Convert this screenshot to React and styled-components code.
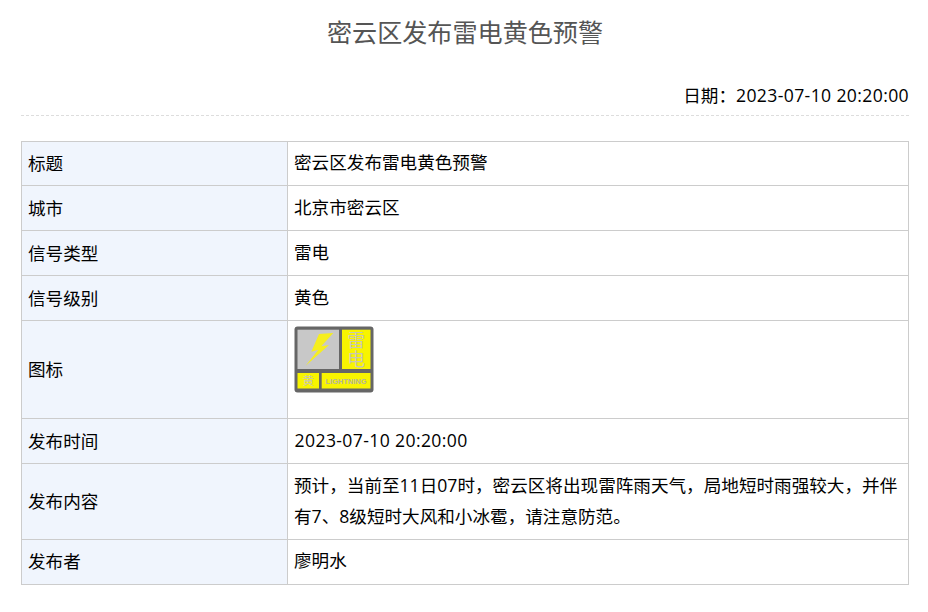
import React from "react";
import styled, { createGlobalStyle } from "styled-components";

const Global = createGlobalStyle`
  html, body { margin: 0; padding: 0; background: #fff; }
  body { font-family: "Open Sans", "Noto Sans CJK SC", sans-serif; color: #000; }
`;
const Page = styled.div`
  width: 888px;
  margin-left: 21px;
  padding: 0 0 27px;
`;
const Title = styled.h1`
  margin: 0;
  height: 65px;
  line-height: 65px;
  font-size: 25.1px;
  font-weight: 400;
  text-align: center;
  color: #555;
`;
const DateLine = styled.div`
  height: 50px;
  line-height: 60px;
  font-size: 17.6px;
  text-align: right;
  border-bottom: 1px dashed #ddd;
  margin-bottom: 25px;
`;
const Num = styled.span`
  letter-spacing: 0.37px;
  margin-left: ${(p) => p.$shift ?? 0}px;
`;
const Table = styled.table`
  width: 888px;
  border-collapse: collapse;
  table-layout: fixed;
  font-size: 17.6px;
`;
const Row = styled.tr`
  height: ${(p) => p.$h}px;
`;
const Label = styled.td`
  width: 266px;
  box-sizing: border-box;
  padding: 0 6px ${(p) => p.$pb ?? 2}px;
  background: #f0f5fd;
  border: 1px solid #ccc;
`;
const Value = styled.td`
  padding: 0 6px ${(p) => p.$pb ?? 2}px;
  border: 1px solid #ccc;
  line-height: 31px;
`;
const IconWrap = styled.div`
  height: 67px;
  margin-top: -19px;
  line-height: 0;
`;
const IconText = styled.text`
  fill: ${(p) => (p.$latin ? "#b4b49c" : "#c8c8b0")};
  text-anchor: middle;
  font-family: ${(p) => (p.$latin ? '"Liberation Sans", sans-serif' : '"Noto Sans CJK SC", sans-serif')};
  font-weight: ${(p) => (p.$latin ? 700 : 400)};
`;

function SignalIcon() {
  return (
    <svg width="80" height="67" viewBox="0 0 80 67">
      <rect x="0.5" y="0.5" width="79" height="66" rx="3" fill="#666" />
      <rect x="3.5" y="3.7" width="41.5" height="39.3" fill="#c8c8c8" />
      <path d="M39.3 7 L25 8 L17.3 25.7 L24.3 23.7 L11.7 39.7 L35 19 L27.3 20.3 Z" fill="#f6ee1e" />
      <rect x="48" y="3.7" width="28.5" height="39.3" fill="#f8f400" />
      <IconText x="62.3" y="20.5" fontSize="18">雷</IconText>
      <IconText x="62.3" y="39.5" fontSize="18">电</IconText>
      <rect x="3.5" y="47" width="21.5" height="15.5" fill="#f8f400" />
      <IconText x="14.2" y="59" fontSize="11.5">黄</IconText>
      <rect x="27.7" y="47" width="48.8" height="15.5" fill="#f8f400" />
      <IconText x="52" y="57.8" fontSize="7.5" $latin>LIGHTNING</IconText>
    </svg>
  );
}

export default function App() {
  return (
    <Page>
      <Global />
      <Title>密云区发布雷电黄色预警</Title>
      <DateLine>日期：<Num>2023-07-10 20:20:00</Num></DateLine>
      <Table>
        <tbody>
          <Row $h={44}><Label>标题</Label><Value>密云区发布雷电黄色预警</Value></Row>
          <Row $h={45}><Label>城市</Label><Value>北京市密云区</Value></Row>
          <Row $h={45}><Label>信号类型</Label><Value>雷电</Value></Row>
          <Row $h={45}><Label>信号级别</Label><Value>黄色</Value></Row>
          <Row $h={98}><Label>图标</Label><Value><IconWrap><SignalIcon /></IconWrap></Value></Row>
          <Row $h={45}><Label>发布时间</Label><Value><Num $shift={0.6}>2023-07-10 20:20:00</Num></Value></Row>
          <Row $h={76}><Label>发布内容</Label><Value>预计，当前至11日07时，密云区将出现雷阵雨天气，局地短时雨强较大，并伴有7、8级短时大风和小冰雹，请注意防范。</Value></Row>
          <Row $h={45}><Label $pb={4}>发布者</Label><Value $pb={4}>廖明水</Value></Row>
        </tbody>
      </Table>
    </Page>
  );
}
